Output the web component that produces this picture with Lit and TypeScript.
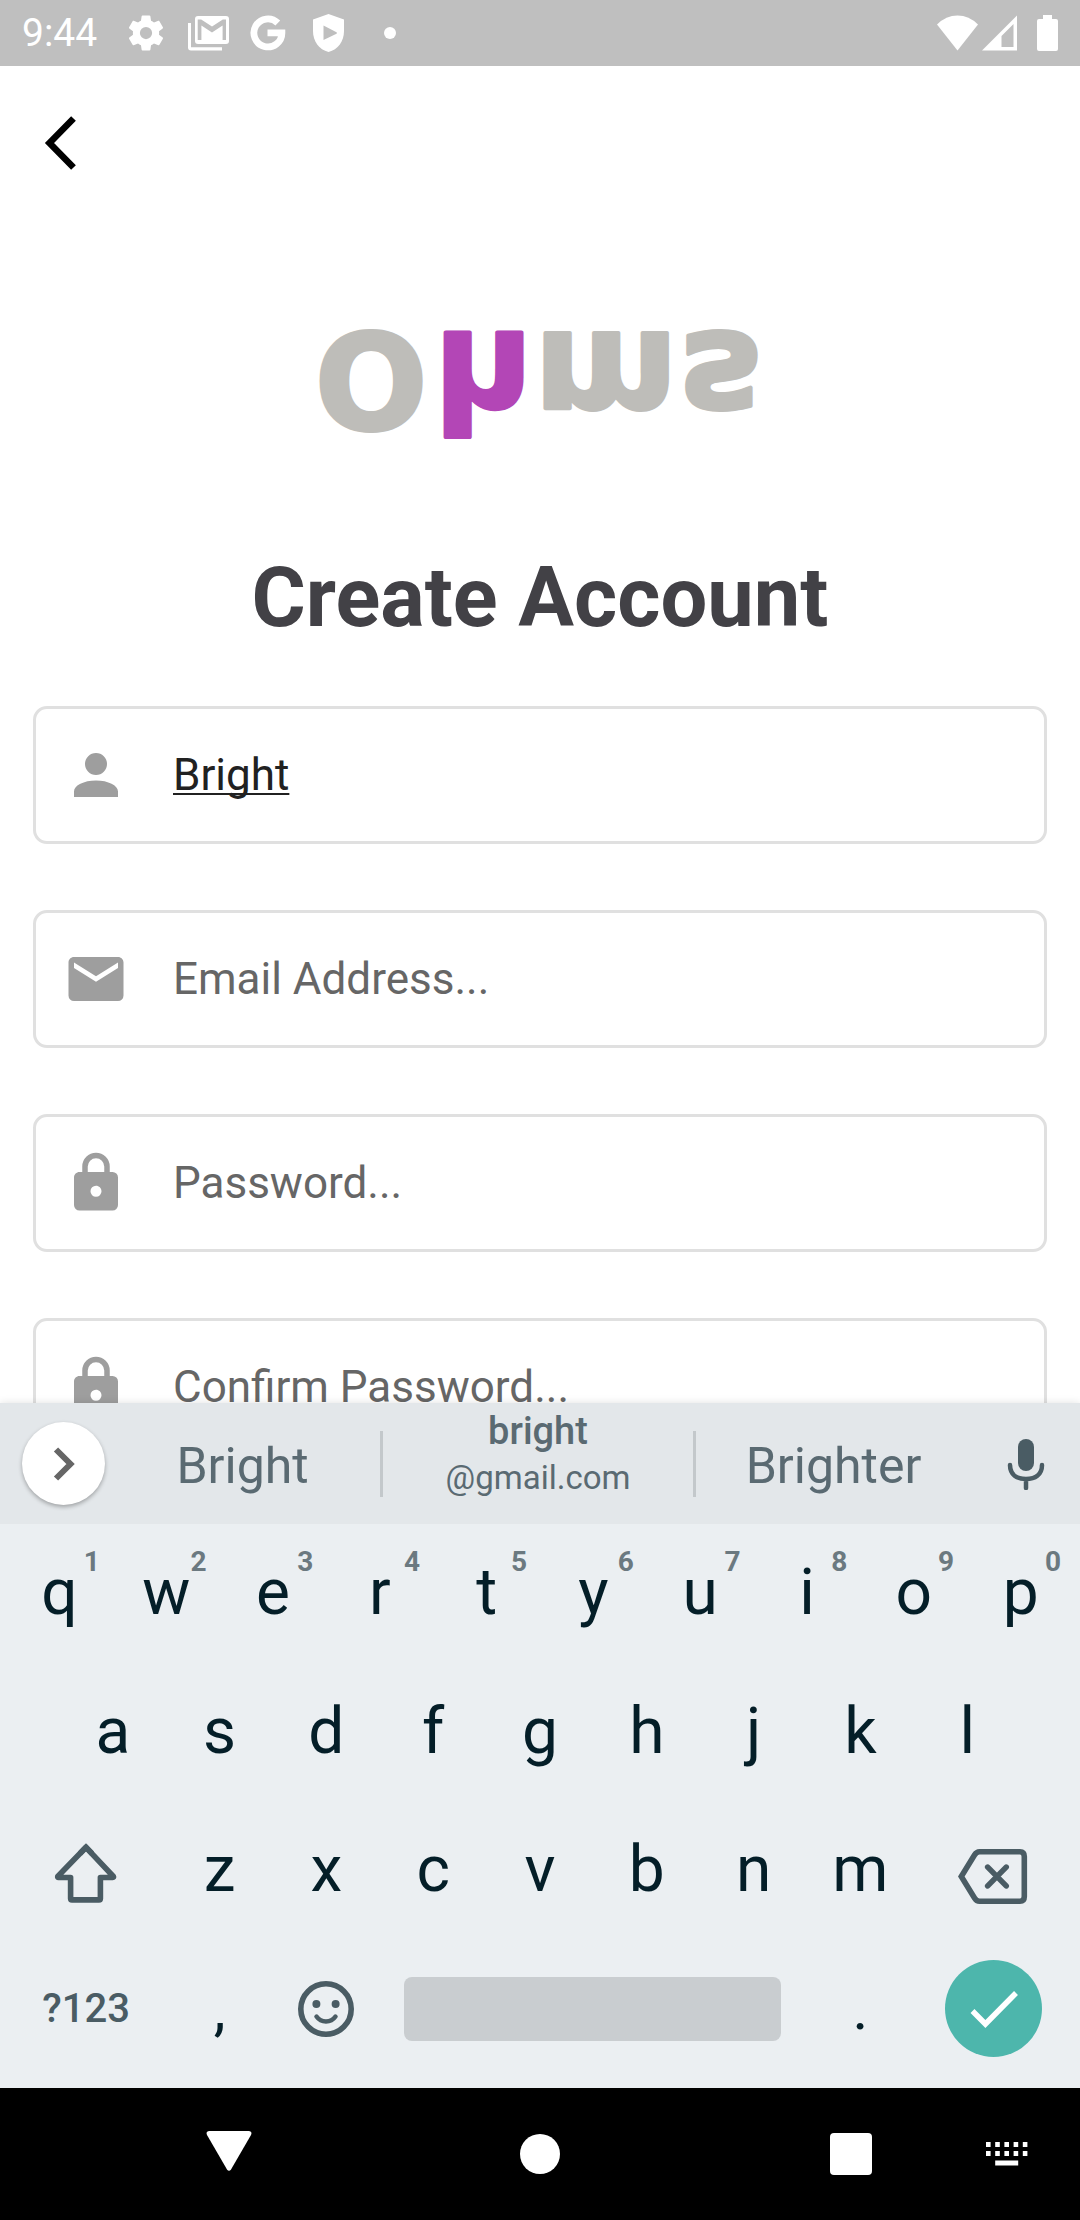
import { LitElement, html, css, svg, nothing, type TemplateResult } from "lit";
import { customElement, property } from "lit/decorators.js";

const PATHS = {
  person:
    "M12,4A4,4 0 0,1 16,8A4,4 0 0,1 12,12A4,4 0 0,1 8,8A4,4 0 0,1 12,4M12,14C16.42,14 20,15.79 20,18V20H4V18C4,15.79 7.58,14 12,14Z",
  mail: "M20,8L12,13L4,8V6L12,11L20,6M20,4H4C2.89,4 2,4.89 2,6V18A2,2 0 0,0 4,20H20A2,2 0 0,0 22,18V6C22,4.89 21.1,4 20,4Z",
  lock: "M12,17A2,2 0 0,0 14,15C14,13.89 13.1,13 12,13A2,2 0 0,0 10,15A2,2 0 0,0 12,17M18,8A2,2 0 0,1 20,10V20A2,2 0 0,1 18,22H6A2,2 0 0,1 4,20V10C4,8.89 4.9,8 6,8H7V6A5,5 0 0,1 12,1A5,5 0 0,1 17,6V8H18M12,3A3,3 0 0,0 9,6V8H15V6A3,3 0 0,0 12,3Z",
  gear: "M12,15.5A3.5,3.5 0 0,1 8.5,12A3.5,3.5 0 0,1 12,8.5A3.5,3.5 0 0,1 15.5,12A3.5,3.5 0 0,1 12,15.5M19.43,12.97C19.47,12.65 19.5,12.33 19.5,12C19.5,11.67 19.47,11.34 19.43,11L21.54,9.37C21.73,9.22 21.78,8.95 21.66,8.73L19.66,5.27C19.54,5.05 19.27,4.96 19.05,5.05L16.56,6.05C16.04,5.66 15.5,5.32 14.87,5.07L14.5,2.42C14.46,2.18 14.25,2 14,2H10C9.75,2 9.54,2.18 9.5,2.42L9.13,5.07C8.5,5.32 7.96,5.66 7.44,6.05L4.95,5.05C4.73,4.96 4.46,5.05 4.34,5.27L2.34,8.73C2.21,8.95 2.27,9.22 2.46,9.37L4.57,11C4.53,11.34 4.5,11.67 4.5,12C4.5,12.33 4.53,12.65 4.57,12.97L2.46,14.63C2.27,14.78 2.21,15.05 2.34,15.27L4.34,18.73C4.46,18.95 4.73,19.03 4.95,18.95L7.44,17.94C7.96,18.34 8.5,18.68 9.13,18.93L9.5,21.58C9.54,21.82 9.75,22 10,22H14C14.25,22 14.46,21.82 14.5,21.58L14.87,18.93C15.5,18.67 16.04,18.34 16.56,17.94L19.05,18.95C19.27,19.03 19.54,18.95 19.66,18.73L21.66,15.27C21.78,15.05 21.73,14.78 21.54,14.63L19.43,12.97Z",
};

@customElement("status-bar")
class StatusBar extends LitElement {
  static styles = css`
    :host {
      display: flex;
      justify-content: space-between;
      align-items: center;
      flex: none;
      height: 66px;
      padding: 0 22px;
      box-sizing: border-box;
      background: #bfbfbf;
      color: #fff;
      font: 39px/48px Roboto, sans-serif;
    }
    .side {
      display: flex;
      align-items: center;
    }
    .time {
      margin-right: 28px;
    }
    .notes {
      display: flex;
      align-items: center;
      gap: 21px;
    }
    .signals {
      display: flex;
      align-items: center;
      gap: 4px;
    }
    .battery {
      margin-left: 16px;
    }
    .dot {
      width: 12px;
      height: 12px;
      margin-left: 12px;
      border-radius: 50%;
      background: #fff;
    }
    svg {
      display: block;
      fill: #fff;
    }
  `;
  render() {
    return html`
      <div class="side">
        <span class="time">9:44</span>
        <div class="notes">
          <svg width="42" height="42" viewBox="0 0 24 24"><path d=${PATHS.gear} /></svg>
          <svg width="41" height="35" viewBox="0 0 41 35">
            <rect x="7" width="34" height="28" rx="3" />
            <path fill="#bfbfbf" d="M9.7 3.5H13.2L24 10.6L34.8 3.5H38V24H34.6V9.6L24 16.4L13.4 9.6V24H9.7Z" />
            <path d="M0 7H3V31.2H34V34.5H3Q0 34.5 0 31.5Z" />
          </svg>
          <svg width="36" height="36" viewBox="0 0 36 36">
            <path fill="none" stroke="#fff" stroke-width="6.8" d="M27.8 8A14 14 0 1 0 31.9 17.8H17.5" />
          </svg>
          <svg width="44" height="38" viewBox="-6 0 44 38">
            <path d="M15.5 0L31 5.5V17C31 27.5 25 35.500 15.500 38C6 35.500 0 27.500 0 17V5.500Z" />
            <path fill="#bfbfbf" d="M10.500 11.500L23.500 18.200Q24.500 19 23.500 19.700L10.500 26Z" />
          </svg>
          <span class="dot"></span>
        </div>
      </div>
      <div class="signals">
        <svg width="41" height="36" viewBox="0 0 41 36"><path d="M0 9.500Q9 0.500 20.500 0.500T41 9.500L20.500 35.500Z" /></svg>
        <svg width="35" height="36" viewBox="0 0 35 36">
          <path fill-rule="evenodd" d="M35 0.500V35.500H0ZM31.500 9L19.500 21V32H31.500Z" />
        </svg>
        <svg class="battery" width="21" height="36" viewBox="0 0 21 36">
          <path d="M6 0H15V4H19Q21 4 21 6V34Q21 36 19 36H2Q0 36 0 34V6Q0 4 2 4H6Z" />
        </svg>
      </div>
    `;
  }
}

@customElement("icon-field")
class IconField extends LitElement {
  @property() icon: "person" | "mail" | "lock" = "person";
  @property() type = "text";
  @property() value = "";
  @property() hint = "";

  static styles = css`
    :host {
      display: flex;
      align-items: center;
      flex: none;
      box-sizing: border-box;
      height: 138px;
      padding: 0 27px;
      border: 3px solid #e0e0e0;
      border-radius: 14px;
      background: #fff;
    }
    .icon {
      flex: none;
      margin-right: 44px;
    }
    svg {
      display: block;
      fill: #9e9e9e;
    }
    .input {
      flex: 1;
      min-width: 0;
      padding: 0;
      border: 0;
      outline: 0;
      background: none;
      color: #212121;
      font: 44px/52px Roboto, sans-serif;
    }
    .composing {
      text-decoration: underline;
      text-decoration-thickness: 2px;
      text-underline-offset: 3px;
      text-decoration-skip-ink: none;
    }
    .input::placeholder {
      color: #666;
      opacity: 1;
    }
  `;
  render() {
    return html`
      <label class="icon" for="control">
        <svg width="66" height="66" viewBox="0 0 24 24"><path d=${PATHS[this.icon]} /></svg>
      </label>
      <input
        id="control"
        class="input ${this.value ? "composing" : ""}"
        type=${this.type}
        aria-label=${this.hint.replace("...", "")}
        placeholder=${this.hint}
        .value=${this.value}
      />
    `;
  }
}

@customElement("soft-keyboard")
class SoftKeyboard extends LitElement {
  static styles = css`
    :host {
      display: block;
      flex: none;
      position: relative;
      background: #ebeff2;
      box-shadow: 0 0 8px rgba(0, 0, 0, 0.12);
      font-family: Roboto, sans-serif;
    }
    button {
      display: flex;
      align-items: center;
      justify-content: center;
      min-width: 0;
      padding: 0;
      border: 0;
      background: none;
      font: inherit;
      color: inherit;
    }
    svg {
      display: block;
      fill: none;
      stroke: #4a5c64;
    }
    .strip {
      display: flex;
      align-items: center;
      height: 121px;
      background: #e3e7ea;
      color: #5a6a72;
      font-size: 50px;
      line-height: 60px;
    }
    .more {
      flex: none;
      width: 83px;
      height: 83px;
      margin-left: 22px;
      border-radius: 50%;
      background: #fff;
      box-shadow: 0 2px 4px rgba(0, 0, 0, 0.3);
    }
    .word {
      flex: 275;
      height: 100%;
      padding-top: 4px;
    }
    .double {
      flex: 310;
      flex-direction: column;
      height: 100%;
      justify-content: flex-start;
    }
    .top {
      font-size: 38px;
      font-weight: 500;
      line-height: 56px;
    }
    .bottom {
      font-size: 33px;
      line-height: 37px;
    }
    .rule {
      flex: none;
      width: 3px;
      height: 66px;
      background: #c3c8cb;
    }
    .mic {
      flex: none;
      width: 109px;
      height: 100%;
    }
    .keys {
      display: grid;
      grid-auto-rows: 1fr;
      height: 564px;
      box-sizing: border-box;
      padding: 0 6px 10px;
      color: #041e28;
      font-size: 64px;
      line-height: 76px;
    }
    .row {
      display: grid;
      grid-template-columns: repeat(20, 1fr);
    }
    .key {
      position: relative;
      grid-column: span 2;
    }
    .indent {
      grid-column: 2 / span 2;
    }
    .wide {
      grid-column: span 3;
    }
    .hint {
      position: absolute;
      top: 24px;
      right: 13px;
      color: #6b7980;
      font-size: 28px;
      font-weight: 700;
      line-height: 28px;
    }
    .symbols {
      color: #4a5c64;
      font-size: 40px;
      font-weight: 500;
    }
    .mark {
      font-size: 60px;
    }
    .space {
      grid-column: span 8;
      align-self: center;
      height: 64px;
      margin: 0 26px 0 24px;
      border-radius: 8px;
      background: #c9cdd0;
    }
    .enter {
      width: 97px;
      height: 97px;
      place-self: center;
      border-radius: 50%;
      background: #4db6ac;
    }
    .enter svg {
      stroke: #fff;
    }
  `;

  private key(letter: string, hint?: string, indent = false): TemplateResult {
    return html`<button class="key ${indent ? "indent" : ""}">
      ${letter}${hint ? html`<span class="hint">${hint}</span>` : nothing}
    </button>`;
  }

  render() {
    return html`
      <div class="strip">
        <button class="more" aria-label="More">
          <svg width="40" height="40" viewBox="0 0 40 40" stroke-width="6">
            <path stroke="#666" d="M12 5.500L26.500 20L12 34.500" />
          </svg>
        </button>
        <button class="word">Bright</button>
        <span class="rule"></span>
        <button class="double"><span class="top">bright</span><span class="bottom">@gmail.com</span></button>
        <span class="rule"></span>
        <button class="word">Brighter</button>
        <button class="mic" aria-label="Voice input">
          <svg width="40" height="52" viewBox="0 0 40 52">
            <rect x="12" y="1" width="16" height="32" rx="8" fill="#4a5c64" stroke="none" />
            <path d="M4 27C4 37 11 41 20 41S36 37 36 27M20 41V50" stroke-width="4.500" stroke-linecap="round" />
          </svg>
        </button>
      </div>
      <div class="keys">
        <div class="row">${[..."qwertyuiop"].map((c, i) => this.key(c, String((i + 1) % 10)))}</div>
        <div class="row">${[..."asdfghjkl"].map((c, i) => this.key(c, undefined, i === 0))}</div>
        <div class="row">
          <button class="wide" aria-label="Shift">
            <svg width="72" height="72" viewBox="0 0 72 72" stroke-width="5.600">
              <path
                stroke-linejoin="round"
                d="M36 13.300L7.700 42.500Q7.500 43.500 8.500 43.500H20.600V64.500Q20.600 65.900 22 65.900H49Q50.400 65.900 50.400 64.500V43.500H62.700Q64 43.500 63.400 42.500Z"
              />
              <path d="M30 19.500L36 13.300L42 19.500" />
            </svg>
          </button>
          ${[..."zxcvbnm"].map((c) => this.key(c))}
          <button class="wide" aria-label="Backspace">
            <svg width="80" height="80" viewBox="0 0 80 80" stroke-width="5.600">
              <path d="M7.300 46.500L20.500 25Q22.500 21.800 25.500 21.800H66Q70.300 21.800 70.300 26.500V66.500Q70.300 71.200 66 71.200H25.500Q22.500 71.200 20.500 68Z" />
              <path stroke-linecap="round" d="M33.700 37.100L52.200 55.900M52.200 37.100L33.700 55.900" />
            </svg>
          </button>
        </div>
        <div class="row">
          <button class="wide symbols">?123</button>
          <button class="key mark">,</button>
          <button class="key" aria-label="Emoji">
            <svg width="60" height="60" viewBox="0 0 60 60">
              <circle cx="30" cy="30" r="25.200" stroke-width="5.600" />
              <circle cx="20.400" cy="25" r="4" fill="#4a5c64" stroke="none" />
              <circle cx="39.600" cy="25" r="4" fill="#4a5c64" stroke="none" />
              <path d="M20.500 37.500Q24 42.500 30 42.500T39.500 37.500" stroke-width="4.500" stroke-linecap="round" />
            </svg>
          </button>
          <button class="space" aria-label="Space"></button>
          <button class="key mark">.</button>
          <button class="wide enter" aria-label="Done">
            <svg width="60" height="60" viewBox="0 0 60 60" stroke-width="5.500">
              <path d="M8.500 32L21.400 45L52 14" />
            </svg>
          </button>
        </div>
      </div>
    `;
  }
}

@customElement("nav-bar")
class NavBar extends LitElement {
  static styles = css`
    :host {
      display: flex;
      flex: none;
      justify-content: space-between;
      height: 132px;
      padding-left: 146px;
      background: #000;
    }
    .group {
      display: flex;
      flex: 1;
      justify-content: space-between;
    }
    button {
      display: flex;
      align-items: center;
      justify-content: center;
      width: 166px;
      padding: 0;
      border: 0;
      background: none;
    }
    .switch {
      width: 146px;
    }
    svg {
      display: block;
      fill: #fff;
    }
  `;
  render() {
    const dots = [0, 9.2, 18.4, 27.6, 36.8];
    return html`
      <div class="group">
        <button aria-label="Back">
          <svg width="48" height="48" viewBox="0 0 48 48">
            <path d="M4 1H44Q47.500 1.500 46 5L26 39.500Q24 42 22 39.500L2 5Q0.500 1.500 4 1Z" />
          </svg>
        </button>
        <button aria-label="Home">
          <svg width="40" height="40" viewBox="0 0 40 40"><circle cx="20" cy="20" r="20" /></svg>
        </button>
        <button aria-label="Recent apps">
          <svg width="42" height="42" viewBox="0 0 42 42"><rect width="42" height="42" rx="4" /></svg>
        </button>
      </div>
      <button class="switch" aria-label="Switch keyboard">
        <svg width="42" height="24" viewBox="0 0 42 24">
          ${dots.map((x) => svg`<rect x=${x} y="0" width="4.600" height="5" /><rect x=${x} y="9" width="4.600" height="5" />`)}
          <rect x="9.200" y="18.500" width="23" height="5" />
        </svg>
      </button>
    `;
  }
}

@customElement("app-root")
class AppRoot extends LitElement {
  static styles = css`
    :host {
      display: flex;
      flex-direction: column;
      height: 100vh;
      background: #fff;
      font-family: Roboto, sans-serif;
    }
    .page {
      display: flex;
      flex-direction: column;
      flex: 1;
      min-height: 0;
      overflow: hidden;
      padding: 44px 33px 0;
    }
    .back {
      flex: none;
      width: 54px;
      height: 66px;
      padding: 0;
      border: 0;
      background: none;
    }
    svg {
      display: block;
    }
    .logo {
      flex: none;
      align-self: center;
      margin-top: 94px;
      font: 700 138px "DejaVu Sans", sans-serif;
      fill: #bebdb9;
      stroke: #bebdb9;
      stroke-width: 4px;
      stroke-linejoin: round;
    }
    .initial {
      font-size: 132px;
    }
    .accent {
      fill: #b346b6;
      stroke: #b346b6;
    }
    .title {
      flex: none;
      margin: 70px 0 60px;
      color: #424146;
      font-size: 83px;
      font-weight: 700;
      line-height: 96px;
      text-align: center;
    }
    .form {
      display: flex;
      flex-direction: column;
      gap: 66px;
    }
  `;
  render() {
    return html`
      <status-bar></status-bar>
      <main class="page">
        <button class="back" aria-label="Back">
          <svg width="54" height="66" viewBox="0 0 54 66">
            <path fill="none" stroke="#000" stroke-width="6.600" d="M40.500 8.500L16.500 33L40.500 57.500" />
          </svg>
        </button>
        <svg class="logo" width="480" height="210" viewBox="0 -40 480 210">
          <g transform="translate(0 23) scale(1 -1)">
            <text class="initial" x="15">O</text>
            <text class="accent" x="134">h</text>
            <text x="234">m</text>
            <text x="380">s</text>
          </g>
        </svg>
        <h1 class="title">Create Account</h1>
        <form class="form">
          <icon-field icon="person" value="Bright" hint="Name..."></icon-field>
          <icon-field icon="mail" type="email" hint="Email Address..."></icon-field>
          <icon-field icon="lock" type="password" hint="Password..."></icon-field>
          <icon-field icon="lock" type="password" hint="Confirm Password..."></icon-field>
        </form>
      </main>
      <soft-keyboard></soft-keyboard>
      <nav-bar></nav-bar>
    `;
  }
}
